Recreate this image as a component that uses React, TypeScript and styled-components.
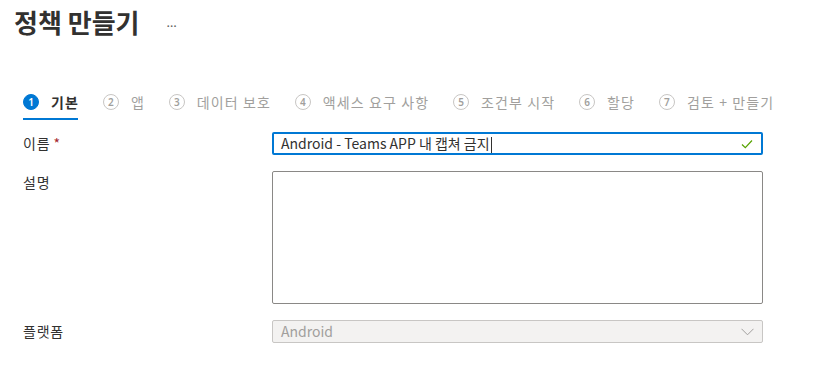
import React from "react";
import styled, { createGlobalStyle } from "styled-components";

const GlobalStyle = createGlobalStyle`
  body {
    margin: 0;
    background: #ffffff;
    font-family: "Noto Sans CJK KR", "Noto Sans", sans-serif;
    color: #323130;
  }
`;

const Page = styled.div`
  width: 816px;
  height: 385px;
  overflow: hidden;
  background: #ffffff;
`;

const Header = styled.header`
  display: flex;
  align-items: center;
  gap: 27px;
  padding: 6px 14px 0;
  height: 32px;
`;

const Title = styled.h1`
  margin: 0;
  font-size: 26px;
  line-height: 32px;
  font-weight: 600;
  color: #323130;
`;

const More = styled.span`
  font-size: 13px;
  color: #605e5c;
  line-height: 32px;
  font-family: "Noto Sans", sans-serif;
`;

const Steps = styled.nav`
  display: flex;
  gap: 25px;
  margin: 54px 0 0 23px;
`;

const Step = styled.div<{ $active?: boolean }>`
  display: flex;
  align-items: center;
  gap: 12px;
  height: 20px;
  padding-bottom: 6px;
  border-bottom: 2px solid ${(p) => (p.$active ? "#0078d4" : "transparent")};
  font-size: 14px;
  line-height: 20px;
  font-weight: ${(p) => (p.$active ? 600 : 400)};
  color: ${(p) => (p.$active ? "#323130" : "#a19f9d")};
`;

const StepText = styled.span`
  letter-spacing: 1.1px;
  margin-right: -1.1px;
`;

const StepNum = styled.span<{ $active?: boolean }>`
  box-sizing: border-box;
  width: 16px;
  height: 16px;
  border-radius: 50%;
  display: flex;
  align-items: center;
  justify-content: center;
  font-size: 10px;
  font-weight: 600;
  font-family: "Noto Sans", sans-serif;
  background: ${(p) => (p.$active ? "#0078d4" : "transparent")};
  color: ${(p) => (p.$active ? "#ffffff" : "#a19f9d")};
  border: 1px solid ${(p) => (p.$active ? "#0078d4" : "#c8c6c4")};
`;

const Form = styled.div`
  display: grid;
  grid-template-columns: 249px 491px;
  row-gap: 16px;
  margin: 12px 0 0 23px;
`;

const Label = styled.label`
  font-size: 14px;
  line-height: 23px;
  letter-spacing: 0.8px;
  color: #323130;
`;

const Required = styled.span`
  color: #a4262c;
  margin-left: 3px;
`;

const TextField = styled.div`
  box-sizing: border-box;
  height: 23px;
  border: 2px solid #0078d4;
  border-radius: 2px;
  display: flex;
  align-items: center;
  padding: 0 8px 0 7px;
  font-size: 14px;
  color: #323130;
`;

const Value = styled.span`
  flex: 1;
  line-height: 19px;
  white-space: nowrap;
`;

const Caret = styled.span`
  display: inline-block;
  width: 1px;
  height: 16px;
  background: #323130;
  vertical-align: middle;
  margin-left: 1px;
`;

const TextArea = styled.div`
  box-sizing: border-box;
  height: 133px;
  border: 1px solid #8a8886;
  border-radius: 2px;
`;

const Select = styled.div`
  box-sizing: border-box;
  height: 23px;
  border: 1px solid #c8c6c4;
  border-radius: 2px;
  background: #f3f2f1;
  display: flex;
  align-items: center;
  padding: 0 8px;
  font-size: 14px;
  color: #a19f9d;
`;

const steps = ["기본", "앱", "데이터 보호", "액세스 요구 사항", "조건부 시작", "할당", "검토 + 만들기"];

function Check() {
  return (
    <svg width="12" height="10" viewBox="0 0 12 10">
      <path d="M1 5.5 L4.3 8.6 L11 1.5" fill="none" stroke="#57a300" strokeWidth="1.2" />
    </svg>
  );
}

function Chevron() {
  return (
    <svg width="13" height="8" viewBox="0 0 13 8">
      <path d="M0.5 0.8 L6.5 6.8 L12.5 0.8" fill="none" stroke="#a19f9d" strokeWidth="1" />
    </svg>
  );
}

export default function App() {
  return (
    <Page>
      <GlobalStyle />
      <Header>
        <Title>정책 만들기</Title>
        <More>…</More>
      </Header>
      <Steps>
        {steps.map((s, i) => (
          <Step key={s} $active={i === 0}>
            <StepNum $active={i === 0}>{i + 1}</StepNum>
            <StepText>{s}</StepText>
          </Step>
        ))}
      </Steps>
      <Form>
        <Label>
          이름<Required>*</Required>
        </Label>
        <TextField>
          <Value>
            Android - Teams APP 내 캡쳐 금지
            <Caret />
          </Value>
          <Check />
        </TextField>
        <Label>설명</Label>
        <TextArea />
        <Label>플랫폼</Label>
        <Select>
          <Value>Android</Value>
          <Chevron />
        </Select>
      </Form>
    </Page>
  );
}
